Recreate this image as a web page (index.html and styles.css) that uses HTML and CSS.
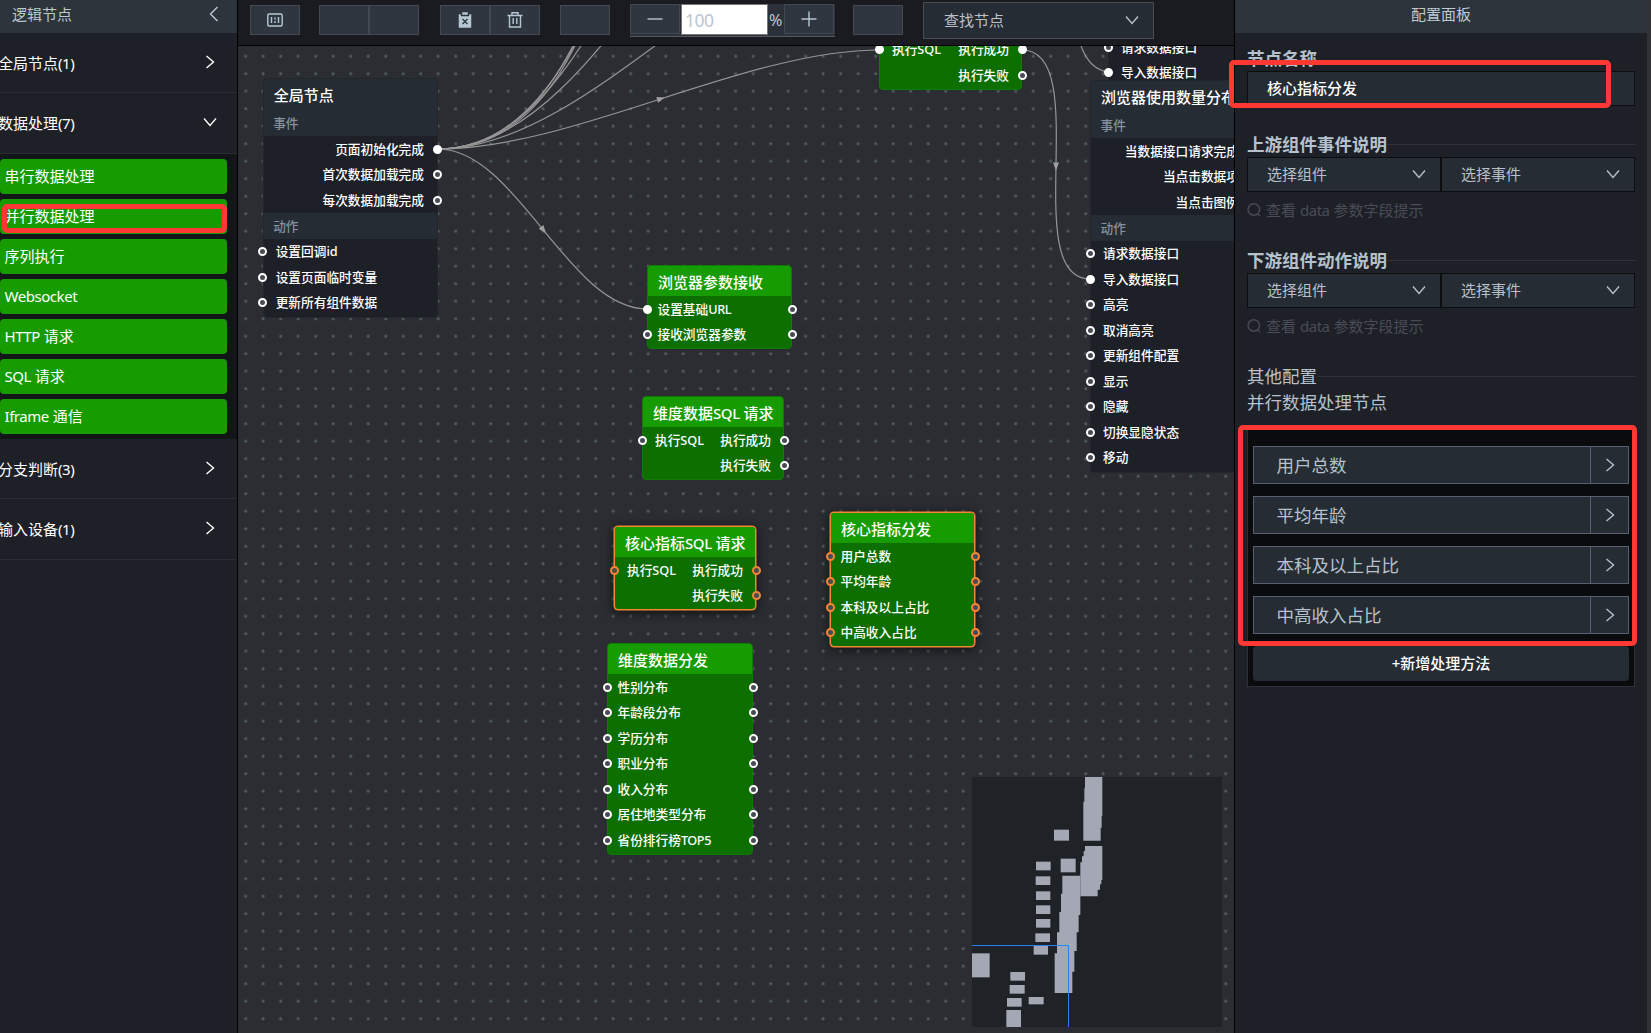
FILE: index.html
```html
<!DOCTYPE html>
<html lang="zh-CN">
<head>
    <meta charset="UTF-8">
    <meta name="viewport" content="width=device-width, initial-scale=1.0">
    <title>逻辑编排</title>
    <link rel="stylesheet" href="styles.css">
</head>
<body>

<svg class="defs">
    <symbol id="right" viewBox="0 0 10 16"><path d="M1.5 2 L8.5 8 L1.5 14"/></symbol>
    <symbol id="left" viewBox="0 0 10 16"><path d="M8.5 1 L1.5 8 L8.5 15"/></symbol>
    <symbol id="down" viewBox="0 0 16 10"><path d="M2 1.5 L8 8.5 L14 1.5"/></symbol>
</svg>

<div class="app">
    <aside class="sidebar">
        <div class="panel-header">逻辑节点 <svg class="arrow back"><use href="#left"/></svg></div>
        <div class="group"><span>全局节点<span class="latin">(1)</span></span> <svg class="arrow"><use href="#right"/></svg></div>
        <div class="group open"><span>数据处理<span class="latin">(7)</span></span> <svg class="arrow down"><use href="#down"/></svg></div>
        <div class="items">
            <div class="item">串行数据处理</div>
            <div class="item">并行数据处理<div class="mark mark-item"></div></div>
            <div class="item">序列执行</div>
            <div class="item"><span class="latin">Websocket</span></div>
            <div class="item"><span class="latin">HTTP</span> 请求</div>
            <div class="item"><span class="latin">SQL</span> 请求</div>
            <div class="item"><span class="latin">Iframe</span> 通信</div>
        </div>
        <div class="group"><span>分支判断<span class="latin">(3)</span></span> <svg class="arrow"><use href="#right"/></svg></div>
        <div class="group open"><span>输入设备<span class="latin">(1)</span></span> <svg class="arrow"><use href="#right"/></svg></div>
    </aside>

    <main class="main">
        <div class="toolbar">
            <div class="btn">
                <svg width="18" height="16" viewBox="0 0 18 16"><rect x="1.8" y="2" width="14.4" height="12" rx="1.5"/><path d="M5.5 5v6M12.5 5v6M9 5.5v2M9 9v2"/></svg>
            </div>
            <div class="btn-group g1"><div class="btn"></div><div class="btn"></div></div>
            <div class="btn-group g2">
                <div class="btn">
                    <svg width="16" height="18" viewBox="0 0 16 18"><path class="solid" d="M1.500 3h2.500v2h8V3h2.500v14h-13z"/><path class="solid" d="M5 1h6v3H5z"/><path class="cut" d="M5.500 8l5 5M10.500 8l-5 5"/></svg>
                </div>
                <div class="btn">
                    <svg width="18" height="18" viewBox="0 0 18 18"><path d="M1.500 4.500h15M6 4V1.800h6V4M3.500 4.500v11.500h11V4.500M7.200 7v6M10.800 7v6"/></svg>
                </div>
            </div>
            <div class="btn g3"></div>
            <div class="zoom">
                <div class="btn"><svg width="16" height="16" viewBox="0 0 16 16"><path d="M.5 8h15"/></svg></div>
                <div class="zoom-input">100</div>
                <span class="percent">%</span>
                <div class="btn"><svg width="16" height="16" viewBox="0 0 16 16"><path d="M.5 8h15M8 .5v15"/></svg></div>
            </div>
            <div class="btn g4"></div>
            <div class="search">查找节点 <svg class="arrow down"><use href="#down"/></svg></div>
        </div>

        <div class="canvas">
            <svg class="edges" viewBox="238 46 996 987">
                <defs>
                    <pattern id="dots" x="237" y="47.600" width="17.500" height="17.500" patternUnits="userSpaceOnUse">
                        <rect x="7.400" y="7.400" width="2.600" height="2.600" rx=".6"/>
                    </pattern>
                </defs>
                <rect class="grid" x="238" y="46" width="996" height="987"/>
                <path d="M438 149C517 149 568 309 647.500 309"/>
                <path d="M438 149C574 149 744 50 880 50"/>
                <path d="M438 149C593 149 745-78 900-78"/>
                <path d="M438 149C617 149 718-230 897-230"/>
                <path d="M438 149C643 149 685-375 890-375"/>
                <path d="M438 149C674 149 654-520 890-520"/>
                <path d="M438 149C711 149 617-680 890-680"/>
                <path d="M438 149C748 149 580-830 890-830"/>
                <path d="M1022 50C1094 50 1018 279 1090 279"/>
                <path d="M1081 46C1087 62 1097 71 1109 72"/>
                <path class="tip" d="M-4-3L4 0L-4 3z" transform="translate(543.500 230) rotate(52)"/>
                <path class="tip" d="M-4-3L4 0L-4 3z" transform="translate(661 98.700) rotate(-17)"/>
                <path class="tip" d="M-4-3L4 0L-4 3z" transform="translate(1056 166.500) rotate(90)"/>
            </svg>

            <div class="node dark n-global">
                <div class="title">全局节点</div>
                <div class="section">事件</div>
                <div class="row out">页面初始化完成<i class="port r on"></i></div>
                <div class="row out">首次数据加载完成<i class="port r"></i></div>
                <div class="row out">每次数据加载完成<i class="port r"></i></div>
                <div class="section">动作</div>
                <div class="row"><i class="port l"></i>设置回调id</div>
                <div class="row"><i class="port l"></i>设置页面临时变量</div>
                <div class="row"><i class="port l"></i>更新所有组件数据</div>
            </div>

            <div class="node dark n-import">
                <div class="row"><i class="port l"></i>请求数据接口</div>
                <div class="row"><i class="port l on"></i>导入数据接口</div>
            </div>

            <div class="node dark n-browser">
                <div class="title">浏览器使用数量分布</div>
                <div class="section">事件</div>
                <div class="row out">当数据接口请求完成</div>
                <div class="row out">当点击数据项</div>
                <div class="row out">当点击图例</div>
                <div class="section">动作</div>
                <div class="row"><i class="port l"></i>请求数据接口</div>
                <div class="row"><i class="port l on"></i>导入数据接口</div>
                <div class="row"><i class="port l"></i>高亮</div>
                <div class="row"><i class="port l"></i>取消高亮</div>
                <div class="row"><i class="port l"></i>更新组件配置</div>
                <div class="row"><i class="port l"></i>显示</div>
                <div class="row"><i class="port l"></i>隐藏</div>
                <div class="row"><i class="port l"></i>切换显隐状态</div>
                <div class="row"><i class="port l"></i>移动</div>
            </div>

            <div class="node sql n-top">
                <div class="title"></div>
                <div class="row"><i class="port l on"></i><span>执行SQL</span><span>执行成功</span><i class="port r on"></i></div>
                <div class="row out">执行失败<i class="port r"></i></div>
            </div>

            <div class="node n-params">
                <div class="title">浏览器参数接收</div>
                <div class="row"><i class="port l on"></i><span>设置基础<span class="latin">URL</span></span><i class="port r"></i></div>
                <div class="row"><i class="port l"></i>接收浏览器参数<i class="port r"></i></div>
            </div>

            <div class="node sql n-dim-sql">
                <div class="title">维度数据<span class="latin">SQL</span> 请求</div>
                <div class="row"><i class="port l"></i><span>执行SQL</span><span>执行成功</span><i class="port r"></i></div>
                <div class="row out">执行失败<i class="port r"></i></div>
            </div>

            <div class="node sql selected n-core-sql">
                <div class="title">核心指标<span class="latin">SQL</span> 请求</div>
                <div class="row"><i class="port l"></i><span>执行SQL</span><span>执行成功</span><i class="port r"></i></div>
                <div class="row out">执行失败<i class="port r"></i></div>
            </div>

            <div class="node selected n-core">
                <div class="title">核心指标分发</div>
                <div class="row"><i class="port l"></i>用户总数<i class="port r"></i></div>
                <div class="row"><i class="port l"></i>平均年龄<i class="port r"></i></div>
                <div class="row"><i class="port l"></i>本科及以上占比<i class="port r"></i></div>
                <div class="row"><i class="port l"></i>中高收入占比<i class="port r"></i></div>
            </div>

            <div class="node n-dim">
                <div class="title">维度数据分发</div>
                <div class="row"><i class="port l"></i>性别分布<i class="port r"></i></div>
                <div class="row"><i class="port l"></i>年龄段分布<i class="port r"></i></div>
                <div class="row"><i class="port l"></i>学历分布<i class="port r"></i></div>
                <div class="row"><i class="port l"></i>职业分布<i class="port r"></i></div>
                <div class="row"><i class="port l"></i>收入分布<i class="port r"></i></div>
                <div class="row"><i class="port l"></i>居住地类型分布<i class="port r"></i></div>
                <div class="row"><i class="port l"></i><span>省份排行榜<span class="latin">TOP5</span></span><i class="port r"></i></div>
            </div>

            <svg class="minimap" viewBox="36 36 750 750">
                <path d="M375 36H427V153H425V188H422V227H370V110H373V70H375z"/>
                <path d="M375 243H427V345H424V358H420V374H413V394H361V292H366V274H371V258H375z"/>
                <path d="M307 332H361V450H356V502H350V558H343V620H337V684H284V565H291V502H298V441H303V386H307z"/>
                <rect x="282" y="194" width="45" height="33"/>
                <rect x="302" y="281" width="45" height="41"/>
                <rect x="228" y="290" width="44" height="26"/>
                <rect x="227" y="334" width="44" height="26"/>
                <rect x="228" y="379" width="43" height="26"/>
                <rect x="228" y="421" width="43" height="26"/>
                <rect x="228" y="462" width="43" height="26"/>
                <rect x="226" y="505" width="44" height="26"/>
                <rect x="221" y="543" width="43" height="26"/>
                <rect x="36" y="565" width="53" height="72"/>
                <rect x="151" y="621" width="44" height="26"/>
                <rect x="149" y="660" width="45" height="26"/>
                <rect x="141" y="699" width="44" height="26"/>
                <rect x="206" y="696" width="45" height="22"/>
                <rect x="139" y="735" width="44" height="51"/>
                <path class="view" d="M36 541.500H325.500V786"/>
            </svg>
        </div>
    </main>

    <aside class="config">
        <div class="panel-header center">配置面板</div>
        <div class="config-body">
            <h3 class="heading h-name">节点名称</h3>
            <div class="field name">核心指标分发</div>

            <h3 class="heading h-up line">上游组件事件说明</h3>
            <div class="selects">
                <div class="field">选择组件 <svg class="arrow down"><use href="#down"/></svg></div>
                <div class="field">选择事件 <svg class="arrow down"><use href="#down"/></svg></div>
            </div>
            <div class="hint"><svg width="14" height="14" viewBox="0 0 14 14"><circle cx="6.800" cy="6.500" r="5.800"/><path d="M10.500 10.800L13 13"/></svg><span>查看 <span class="latin">data</span> 参数字段提示</span></div>

            <h3 class="heading h-down line">下游组件动作说明</h3>
            <div class="selects">
                <div class="field">选择组件 <svg class="arrow down"><use href="#down"/></svg></div>
                <div class="field">选择事件 <svg class="arrow down"><use href="#down"/></svg></div>
            </div>
            <div class="hint"><svg width="14" height="14" viewBox="0 0 14 14"><circle cx="6.800" cy="6.500" r="5.800"/><path d="M10.500 10.800L13 13"/></svg><span>查看 <span class="latin">data</span> 参数字段提示</span></div>

            <h3 class="heading h-other line">其他配置</h3>
            <p class="sub">并行数据处理节点</p>
            <div class="methods">
                <div class="method"><span>用户总数</span><b><svg class="arrow"><use href="#right"/></svg></b></div>
                <div class="method"><span>平均年龄</span><b><svg class="arrow"><use href="#right"/></svg></b></div>
                <div class="method"><span>本科及以上占比</span><b><svg class="arrow"><use href="#right"/></svg></b></div>
                <div class="method"><span>中高收入占比</span><b><svg class="arrow"><use href="#right"/></svg></b></div>
                <div class="add">+新增处理方法</div>
            </div>
        </div>
        <div class="mark mark-name"></div>
        <div class="mark mark-methods"></div>
    </aside>
</div>

</body>
</html>
```
FILE: styles.css
```css
* {
    box-sizing: border-box;
}
body {
    margin: 0;
    background: #1d2026;
    color: #fff;
    font-family: "Noto Sans", "Noto Sans CJK SC", sans-serif;
    font-size: 15px;
    line-height: 20px;
    overflow: hidden;
}
.defs {
    display: none;
}
.app {
    display: flex;
    height: 1033px;
}
svg {
    fill: none;
    stroke: currentColor;
    stroke-width: 1.4;
}
.latin {
    letter-spacing: -.45px;
}
.arrow {
    width: 10px;
    height: 16px;
    flex: none;
}
.arrow.down {
    width: 16px;
    height: 10px;
}
.panel-header {
    display: flex;
    align-items: center;
    justify-content: space-between;
    height: 33px;
    padding: 0 18px 6px 12px;
    background: #2d343c;
    color: #bcc9d4;
}
.panel-header.center {
    justify-content: center;
    padding: 0 0 6px;
}
.mark {
    position: absolute;
    border: 5px solid #ff3834;
    border-radius: 5px;
}

/* left panel */
.sidebar {
    width: 238px;
    flex: none;
    border-right: 1px solid #000;
    background: #1d2026;
    overflow: hidden;
}
.group {
    display: flex;
    align-items: center;
    justify-content: space-between;
    height: 60px;
    padding: 0 22px 0 0;
    border-bottom: 1px solid #2a2d31;
    text-indent: -2px;
}
.group.open {
    height: 61px;
}
.group .arrow {
    margin-bottom: 2px;
}
.group .arrow.down {
    margin-right: -3px;
}
.items {
    display: flex;
    flex-direction: column;
    gap: 5px;
    height: 285px;
    padding: 5px 10px 5px 0;
    background: #131619;
}
.item {
    position: relative;
    height: 35px;
    padding-left: 4.5px;
    line-height: 34px;
    background: #169b00;
    border-radius: 4px;
}
.mark-item {
    left: 2px;
    top: 4.5px;
    width: 225px;
    height: 29px;
}

/* toolbar */
.main {
    width: 996px;
    flex: none;
}
.toolbar {
    display: flex;
    align-items: flex-start;
    height: 46px;
    padding: 5px 0 0 12px;
    background: #191b20;
    border-bottom: 1px solid #000;
    color: #b5c7d2;
}
.btn {
    display: flex;
    align-items: center;
    justify-content: center;
    width: 50px;
    height: 30px;
    background: #2f3640;
    border: 1px solid #44484f;
}
.btn-group {
    display: flex;
}
.g1 {
    margin-left: 19px;
}
.g2 {
    margin-left: 21px;
}
.g3 {
    margin-left: 20px;
}
.g4 {
    margin-left: 18px;
}
.solid {
    fill: currentColor;
    stroke: #2f3640;
    stroke-width: .5;
}
.cut {
    stroke: #2f3640;
}
.zoom {
    display: flex;
    width: 205px;
    height: 33px;
    margin: -1px 0 0 20px;
    background: #2b3039;
    border-bottom: 1px solid #555a61;
}
.zoom-input {
    width: 87px;
    height: 31px;
    margin-left: 1px;
    padding-left: 3px;
    background: #fff;
    border: 1px solid #777;
    color: #bcc5d6;
    font-size: 17.5px;
    letter-spacing: -.5px;
    line-height: 31px;
}
.percent {
    width: 16px;
    padding-left: 1px;
    font-size: 16px;
    line-height: 32px;
}
.search {
    display: flex;
    align-items: center;
    justify-content: space-between;
    width: 231px;
    height: 37px;
    margin: -3px 0 0 20px;
    padding: 0 13px 2px 20px;
    background: #262c33;
    border: 1px solid #484c51;
    color: #bcc1c8;
}

/* canvas */
.canvas {
    position: relative;
    height: 987px;
    background: #2b2d32;
    overflow: hidden;
}
.edges {
    display: block;
    width: 996px;
    height: 987px;
    stroke: #969696;
    stroke-width: 1.2;
}
.edges pattern rect {
    fill: #52605f;
    stroke: none;
}
.edges .grid {
    fill: url(#dots);
    stroke: none;
}
.edges .tip {
    fill: #a0a0a0;
    stroke: none;
}
.node {
    position: absolute;
    padding-bottom: 1px;
    background: #0d6f00;
    border: 1px solid #0f7a05;
    border-radius: 4px;
    font-size: 12.7px;
    font-weight: 500;
}
.node .title {
    height: 30px;
    padding-left: 10px;
    background: #169b00;
    border-radius: 3px 3px 0 0;
    font-size: 15px;
    line-height: 32px;
    white-space: nowrap;
}
.row {
    position: relative;
    display: flex;
    align-items: center;
    justify-content: space-between;
    height: 25.5px;
    padding: 0 9.5px;
    white-space: nowrap;
}
.row.out {
    justify-content: flex-end;
}
.sql .row,
.dark .row {
    padding: 0 12px;
}
.node.dark {
    padding-bottom: 2px;
    background: #1e2028;
    border-color: #22262d;
}
.dark .title,
.section {
    background: #262c34;
}
.dark .title {
    height: 31px;
}
.section {
    height: 26px;
    padding-left: 9.5px;
    color: #8391a0;
    line-height: 26px;
}
.dark .row.out {
    padding-right: 13px;
}
.port {
    position: absolute;
    top: 8.500px;
    width: 9px;
    height: 9px;
    background: #474b54;
    border: 2px solid #fff;
    border-radius: 50%;
}
.port.l {
    left: -5.5px;
}
.port.r {
    right: -5.5px;
}
.port.on {
    background: #fff;
}
.node.selected {
    border-color: #f88532;
    box-shadow: 0 0 0 .5px #f88532, 0 2px 12px rgba(0, 0, 0, .7);
}
.selected .port {
    border-color: #f88532;
}
.n-global {
    left: 24.7px;
    top: 32px;
    width: 175.3px;
}
.n-import {
    left: 870px;
    top: -13px;
    width: 163px;
}
.n-browser {
    left: 852px;
    top: 34px;
    width: 163px;
}
.n-top {
    left: 641px;
    top: -40.5px;
    width: 143px;
}
.n-params {
    left: 409px;
    top: 219px;
    width: 145px;
}
.n-dim-sql {
    left: 404px;
    top: 350px;
    width: 142px;
}
.n-core-sql {
    left: 376px;
    top: 480px;
    width: 142px;
}
.n-core {
    left: 592px;
    top: 466px;
    width: 145px;
}
.n-dim {
    left: 369px;
    top: 597px;
    width: 146px;
}
.minimap {
    position: absolute;
    left: 734px;
    top: 731px;
    width: 250px;
    height: 250px;
    background: #1f2226;
    fill: #a3a8b4;
    stroke: none;
}
.minimap .view {
    fill: none;
    stroke: #2a80f5;
    stroke-width: 3;
}

/* right panel */
.config {
    position: relative;
    width: 417px;
    flex: none;
    background: #1e2027;
    border-left: 1px solid #000;
    border-right: 4px solid #313234;
}
.config-body {
    padding: 14px 12px 0;
}
.heading {
    display: flex;
    align-items: center;
    height: 24px;
    margin: 0;
    padding-bottom: 2px;
    color: #b5c1cc;
    font-size: 17.5px;
    font-weight: 700;
}
.heading.line::after {
    content: "";
    flex: 1;
    height: 1px;
    background: #303438;
}
.field {
    display: flex;
    align-items: center;
    justify-content: space-between;
    flex: 1;
    height: 35px;
    padding: 0 13px 1px 19px;
    background: #262c33;
    border: 1px solid #0c0d0f;
    color: #b9c0c9;
}
.field.name {
    color: #fff;
    font-weight: 500;
}
.h-up {
    margin-top: 27px;
}
.h-down {
    margin-top: 29px;
}
.h-other {
    margin-top: 29px;
    font-weight: 400;
}
.selects {
    display: flex;
}
.hint {
    display: flex;
    align-items: center;
    gap: 5px;
    height: 20px;
    margin-top: 8px;
    color: #484c56;
    stroke-width: 1;
}
.sub {
    margin: 3px 0 13px;
    color: #b5c1cc;
    font-size: 17.5px;
}
.methods {
    height: 262px;
    padding: 20px 5px 0;
    background: #0a0b0d;
    border: 1px solid #2a313b;
}
.method {
    display: flex;
    height: 38px;
    margin-bottom: 12px;
    background: #262c33;
    border: 1px solid #566072;
    color: #b5c1cc;
    font-size: 17.5px;
    line-height: 37px;
}
.method span {
    flex: 1;
    padding-left: 22.5px;
}
.method b {
    display: flex;
    align-items: center;
    justify-content: center;
    width: 38px;
    padding-left: 1px;
    border-left: 1px solid #566072;
}
.add {
    height: 35px;
    background: #262c33;
    border-radius: 4px;
    font-weight: 500;
    line-height: 34px;
    text-align: center;
}
.mark-name {
    left: -6px;
    top: 60px;
    width: 382px;
    height: 48px;
}
.mark-methods {
    left: 3px;
    top: 425px;
    width: 399px;
    height: 221px;
}
```
